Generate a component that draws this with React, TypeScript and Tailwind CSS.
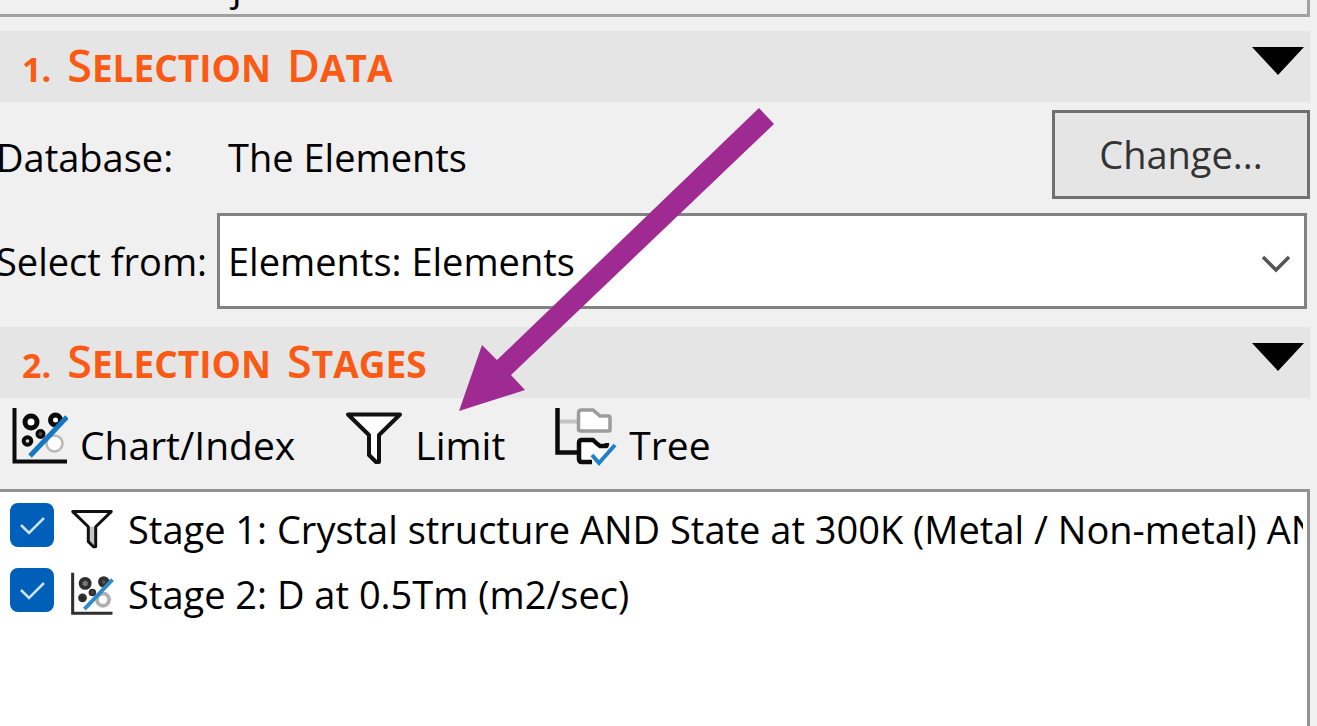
import { useState, type ReactNode } from "react";

function ChartIcon({ className, muted = false }: { className: string; muted?: boolean }) {
  const ink = muted ? "#2f2f2f" : "#0b0b0b";
  return (
    <svg viewBox="0 0 56 58" className={className} fill="none" aria-hidden="true">
      <path d="M2.5 1V54.5H55" stroke={ink} strokeWidth="4" />
      <circle cx="19" cy="15" r="6" stroke={ink} strokeWidth="5" fill={muted ? "#777" : "#fff"} />
      <circle cx="43.500" cy="13" r="5" stroke={ink} strokeWidth="5" fill={muted ? "#555" : "#fff"} />
      <circle cx="15.500" cy="34" r="3.800" stroke={ink} strokeWidth="4" fill={muted ? "#222" : "#ddd"} />
      <circle cx="28.500" cy="27" r="3.500" stroke={ink} strokeWidth="3" fill="#444" />
      <circle cx="42.500" cy="36.500" r="8" stroke={muted ? "#b0b0b0" : "#b8b8b8"} strokeWidth={muted ? 5 : 2.5} fill="#fff" />
      <path d="M18 49L55 10" stroke={muted ? "#2f8bcb" : "#1478c2"} strokeWidth="5" />
    </svg>
  );
}

function FunnelIcon({ className, stem = "#fff" }: { className: string; stem?: string }) {
  return (
    <svg viewBox="0 0 58 54" className={className} aria-hidden="true">
      <path d="M3 3.500H55L34 24V43L35 51H32L24 44V24Z" fill="#fff" />
      <path d="M24 24H34V50H31L24 44Z" fill={stem} />
      <path
        d="M3 3.500H55L34 24V51H31L24 44V24Z"
        fill="none"
        stroke="#111"
        strokeWidth="4"
        strokeLinejoin="round"
      />
    </svg>
  );
}

function TreeIcon({ className }: { className: string }) {
  return (
    <svg viewBox="0 0 62 60" className={className} fill="none" aria-hidden="true">
      <path d="M5 14.500H23" stroke="#c4c4c4" strokeWidth="4" />
      <path d="M2.500 1V45.500H23" stroke="#0b0b0b" strokeWidth="4.500" />
      <path
        d="M23.500 6Q23.500 3 26.500 3H38L45 9H53.500Q55 9 55 11V22.500Q55 24 53.500 24H25.500Q23.500 24 23.500 22Z"
        stroke="#9c9c9c"
        strokeWidth="3.500"
        fill="#fff"
      />
      <path d="M24 33H39L46 38H52V54H24Z" fill="#fff" />
      <path
        d="M37 55H27Q24 55 24 52V36Q24 33 27 33H38Q42 37 45 39H51Q52 39 52 36"
        stroke="#0b0b0b"
        strokeWidth="4.500"
      />
      <path d="M37 48L44 56L60 38" stroke="#1e7fca" strokeWidth="4" />
    </svg>
  );
}

function SectionHeader({
  number,
  title,
  open,
  onToggle,
}: {
  number: string;
  title: string;
  open: boolean;
  onToggle: () => void;
}) {
  return (
    <header className="mr-[7px] flex h-[71px] shrink-0 items-center justify-between bg-[#e5e5e5] pr-1.5 pl-5.5">
      <h2 className="flex items-baseline gap-4 pb-1 font-['Open_Sans','Noto_Sans',sans-serif] text-[45px] leading-none font-bold text-[#fa5a14]">
        <span className="text-[34px]">{number}</span>
        {title.split(" ").map((word) => (
          <span key={word}>
            <span className="font-semibold">{word[0]}</span>
            <span className="text-[37px] uppercase">{word.slice(1)}</span>
          </span>
        ))}
      </h2>
      <button type="button" aria-label={title} aria-expanded={open} onClick={onToggle} className="pb-3">
        <svg viewBox="0 0 54 29" className={open ? "h-7 w-13" : "h-7 w-13 -rotate-90"} aria-hidden="true">
          <path d="M0 0H54L27 29Z" fill="#000" />
        </svg>
      </button>
    </header>
  );
}

function ToolButton({ icon, children }: { icon: ReactNode; children: ReactNode }) {
  return (
    <button type="button" className="flex items-end gap-3">
      {icon}
      <span className="text-[39px] leading-12">{children}</span>
    </button>
  );
}

function StageRow({ id, icon, children }: { id: string; icon: ReactNode; children: ReactNode }) {
  const [checked, setChecked] = useState(true);
  return (
    <li className="flex h-[65px] items-center pl-2.5">
      <span className="relative flex shrink-0 pb-2">
        <input
          id={id}
          type="checkbox"
          checked={checked}
          onChange={() => setChecked(!checked)}
          className="size-11 appearance-none rounded-lg border-2 border-[#005fb8] bg-white checked:bg-[#005fb8]"
        />
        {checked && (
          <svg viewBox="0 0 44 44" className="pointer-events-none absolute top-0 left-0 size-11" aria-hidden="true">
            <path d="M11 22L19 30L34 15" fill="none" stroke="#cfe3f5" strokeWidth="2.500" />
          </svg>
        )}
      </span>
      <label htmlFor={id} className="flex min-w-0 flex-1 items-center gap-3.5 overflow-hidden pl-4 whitespace-nowrap">
        {icon}
        <span>{children}</span>
      </label>
    </li>
  );
}

export default function App() {
  const [dataOpen, setDataOpen] = useState(true);
  const [stagesOpen, setStagesOpen] = useState(true);

  return (
    <main className="relative flex h-screen flex-col overflow-hidden bg-[#f0f0f0] font-['Open_Sans','Noto_Sans',sans-serif] text-[38px] leading-12 text-black">
      <div className="mr-[7px] flex h-[17px] shrink-0 items-end overflow-hidden border-r-3 border-b-3 border-[#a0a0a0] pl-58">
        <span className="pb-1">j</span>
      </div>

      <section className="mt-3.5 shrink-0">
        <SectionHeader number="1." title="Selection Data" open={dataOpen} onToggle={() => setDataOpen(!dataOpen)} />
        {dataOpen && (
          <div className="pb-[18px]">
            <div className="flex items-center pt-2 pr-[7px]">
              <span className="-ml-1 w-58 pt-1">Database:</span>
              <span className="flex-1 pt-1">The Elements</span>
              <button
                type="button"
                className="h-[89px] w-[258px] border-3 border-[#707070] bg-[#e5e5e5] pb-0.5 text-[#333]"
              >
                Change...
              </button>
            </div>
            <div className="flex items-center pt-3.5 pr-2.5">
              <label htmlFor="universe" className="-ml-1 w-[221px] shrink-0 whitespace-nowrap">
                Select from:
              </label>
              <div className="relative flex-1">
                <select
                  id="universe"
                  className="block h-24 w-full appearance-none border-3 border-[#828282] bg-white pl-2 text-black"
                >
                  <option>Elements: Elements</option>
                </select>
                <svg
                  viewBox="0 0 30 18"
                  className="pointer-events-none absolute top-10.5 right-4 h-[18px] w-[30px]"
                  aria-hidden="true"
                >
                  <path d="M2 2L15 15L28 2" fill="none" stroke="#555" strokeWidth="3.500" />
                </svg>
              </div>
            </div>
          </div>
        )}
      </section>

      <section className="flex min-h-0 flex-1 flex-col">
        <SectionHeader
          number="2."
          title="Selection Stages"
          open={stagesOpen}
          onToggle={() => setStagesOpen(!stagesOpen)}
        />
        {stagesOpen && (
          <>
            <div className="flex h-[91px] shrink-0 items-end gap-[50px] pb-5 pl-3">
              <ToolButton icon={<ChartIcon className="mb-1 h-[58px] w-14" />}>Chart/Index</ToolButton>
              <ToolButton icon={<FunnelIcon className="mb-1 h-[54px] w-[58px]" />}>Limit</ToolButton>
              <ToolButton icon={<TreeIcon className="mb-0.5 h-[60px] w-[62px]" />}>Tree</ToolButton>
            </div>
            <ul className="mr-[7px] min-h-0 flex-1 border-t-3 border-r-3 border-[#929292] bg-white pt-1 pr-1">
              <StageRow id="stage-1" icon={<FunnelIcon className="h-10 w-11 shrink-0" stem="#c4c4c4" />}>
                Stage 1: Crystal structure AND State at 300K (Metal / Non-metal) AND
              </StageRow>
              <StageRow id="stage-2" icon={<ChartIcon className="h-11 w-11 shrink-0" muted />}>
                Stage 2: D at 0.5Tm (m2/sec)
              </StageRow>
            </ul>
          </>
        )}
      </section>

      <svg
        viewBox="0 0 316 304"
        className="pointer-events-none absolute top-[108px] left-[459px] h-[304px] w-[316px]"
        aria-hidden="true"
      >
        <path d="M300 0L315 16L52 267L66 282L0 303L23 237L38 252Z" fill="#9f2b92" />
      </svg>
    </main>
  );
}
